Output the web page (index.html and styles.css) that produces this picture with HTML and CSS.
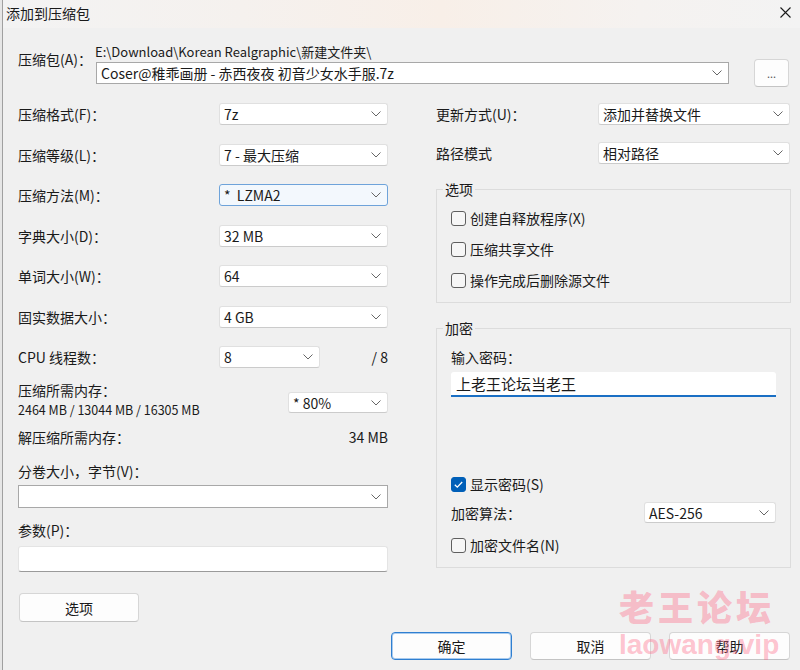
FILE: index.html
```html
<!DOCTYPE html>
<html lang="zh-CN">
<head>
    <meta charset="UTF-8">
    <meta name="viewport" content="width=device-width, initial-scale=1.0">
    <title>添加到压缩包</title>
    <link rel="stylesheet" href="styles.css">
</head>
<body>
    <div class="window">
        <div class="titlebar">
            <span class="title">添加到压缩包</span>
            <svg class="close" width="11" height="11" viewBox="0 0 11 11"><path d="M0.5 0.5 L10.5 10.5 M10.5 0.5 L0.5 10.5" stroke="#1a1a1a" stroke-width="1.1" fill="none"/></svg>
        </div>

        <div class="archive">
            <div class="archive-label">压缩包(A)：</div>
            <div class="archive-fields">
                <div class="archive-path">E:\Download\Korean Realgraphic\新建文件夹\</div>
                <div class="archive-row">
                    <div class="combo edit archive-combo">
                        <span>Coser@稚乖画册 - 赤西夜夜 初音少女水手服.7z</span>
                        <svg class="chev" width="10" height="6" viewBox="0 0 10 6"><polyline points="0.5,0.5 5,5 9.5,0.5" fill="none" stroke="#666" stroke-width="1"/></svg>
                    </div>
                    <button class="btn btn-browse">...</button>
                </div>
            </div>
        </div>

        <div class="columns">
            <!-- 左侧：压缩参数 -->
            <div class="col-left">
                <div class="stack">
                    <div class="field">
                        <span class="field-label">压缩格式(F)：</span>
                        <div class="combo"><span>7z</span><svg class="chev" width="10" height="6" viewBox="0 0 10 6"><polyline points="0.5,0.5 5,5 9.5,0.5" fill="none" stroke="#666" stroke-width="1"/></svg></div>
                    </div>
                    <div class="field">
                        <span class="field-label">压缩等级(L)：</span>
                        <div class="combo"><span>7 - 最大压缩</span><svg class="chev" width="10" height="6" viewBox="0 0 10 6"><polyline points="0.5,0.5 5,5 9.5,0.5" fill="none" stroke="#666" stroke-width="1"/></svg></div>
                    </div>
                    <div class="field">
                        <span class="field-label">压缩方法(M)：</span>
                        <div class="combo focus"><span>*&nbsp; LZMA2</span><svg class="chev" width="10" height="6" viewBox="0 0 10 6"><polyline points="0.5,0.5 5,5 9.5,0.5" fill="none" stroke="#666" stroke-width="1"/></svg></div>
                    </div>
                    <div class="field">
                        <span class="field-label">字典大小(D)：</span>
                        <div class="combo"><span>32 MB</span><svg class="chev" width="10" height="6" viewBox="0 0 10 6"><polyline points="0.5,0.5 5,5 9.5,0.5" fill="none" stroke="#666" stroke-width="1"/></svg></div>
                    </div>
                    <div class="field">
                        <span class="field-label">单词大小(W)：</span>
                        <div class="combo"><span>64</span><svg class="chev" width="10" height="6" viewBox="0 0 10 6"><polyline points="0.5,0.5 5,5 9.5,0.5" fill="none" stroke="#666" stroke-width="1"/></svg></div>
                    </div>
                    <div class="field">
                        <span class="field-label">固实数据大小：</span>
                        <div class="combo"><span>4 GB</span><svg class="chev" width="10" height="6" viewBox="0 0 10 6"><polyline points="0.5,0.5 5,5 9.5,0.5" fill="none" stroke="#666" stroke-width="1"/></svg></div>
                    </div>
                    <div class="field">
                        <span class="field-label">CPU 线程数：</span>
                        <div class="combo combo-threads"><span>8</span><svg class="chev" width="10" height="6" viewBox="0 0 10 6"><polyline points="0.5,0.5 5,5 9.5,0.5" fill="none" stroke="#666" stroke-width="1"/></svg></div>
                        <span class="suffix">/ 8</span>
                    </div>
                </div>

                <div class="memory">
                    <div>
                        <div>压缩所需内存：</div>
                        <div class="memory-values">2464 MB / 13044 MB / 16305 MB</div>
                    </div>
                    <div class="combo combo-memory"><span>* 80%</span><svg class="chev" width="10" height="6" viewBox="0 0 10 6"><polyline points="0.5,0.5 5,5 9.5,0.5" fill="none" stroke="#666" stroke-width="1"/></svg></div>
                </div>

                <div class="unpack">
                    <span>解压缩所需内存：</span>
                    <span>34 MB</span>
                </div>

                <div class="volume-label">分卷大小，字节(V)：</div>
                <div class="combo edit combo-volume"><span></span><svg class="chev" width="10" height="6" viewBox="0 0 10 6"><polyline points="0.5,0.5 5,5 9.5,0.5" fill="none" stroke="#666" stroke-width="1"/></svg></div>

                <div class="param-label">参数(P)：</div>
                <div class="text-input param-input"></div>

                <button class="btn btn-options">选项</button>
            </div>

            <!-- 右侧：更新方式 / 选项 / 加密 -->
            <div class="col-right">
                <div class="stack stack-right">
                    <div class="field">
                        <span class="field-label">更新方式(U)：</span>
                        <div class="combo"><span>添加并替换文件</span><svg class="chev" width="10" height="6" viewBox="0 0 10 6"><polyline points="0.5,0.5 5,5 9.5,0.5" fill="none" stroke="#666" stroke-width="1"/></svg></div>
                    </div>
                    <div class="field">
                        <span class="field-label">路径模式</span>
                        <div class="combo"><span>相对路径</span><svg class="chev" width="10" height="6" viewBox="0 0 10 6"><polyline points="0.5,0.5 5,5 9.5,0.5" fill="none" stroke="#666" stroke-width="1"/></svg></div>
                    </div>
                </div>

                <fieldset class="group">
                    <legend>选项</legend>
                    <div class="group-body options-body">
                        <label class="check"><span class="box"></span>创建自释放程序(X)</label>
                        <label class="check"><span class="box"></span>压缩共享文件</label>
                        <label class="check"><span class="box"></span>操作完成后删除源文件</label>
                    </div>
                </fieldset>

                <fieldset class="group">
                    <legend>加密</legend>
                    <div class="group-body">
                        <div class="pw-label">输入密码：</div>
                        <div class="text-input pw-input">上老王论坛当老王</div>
                        <label class="check show-pw"><span class="box checked"><svg width="15" height="15" viewBox="0 0 15 15"><polyline points="3.8,7.8 6.3,10.2 11.2,5" fill="none" stroke="#fff" stroke-width="1.3"/></svg></span>显示密码(S)</label>
                        <div class="algo">
                            <span>加密算法：</span>
                            <div class="combo combo-algo"><span>AES-256</span><svg class="chev" width="10" height="6" viewBox="0 0 10 6"><polyline points="0.5,0.5 5,5 9.5,0.5" fill="none" stroke="#666" stroke-width="1"/></svg></div>
                        </div>
                        <label class="check enc-names"><span class="box"></span>加密文件名(N)</label>
                    </div>
                </fieldset>
            </div>
        </div>

        <div class="footer">
            <button class="btn btn-default">确定</button>
            <button class="btn">取消</button>
            <button class="btn">帮助</button>
        </div>

        <div class="watermark">
            <div class="wm-cn">老王论坛</div>
            <div class="wm-en">laowang.vip</div>
        </div>
    </div>
</body>
</html>
```

FILE: styles.css
```css
* {
    box-sizing: border-box;
}

body {
    margin: 0;
    background: #e6e6e6;
    font-family: "Noto Sans CJK SC", "Noto Sans", sans-serif;
    font-size: 14px;
    color: #1a1a1a;
}

/* 对话框窗口 */
.window {
    position: relative;
    width: 798px;
    height: 670px;
    margin-left: 2px;
    border-left: 1px solid #a0a0a0;
    background: #f0f0f0;
    overflow: hidden;
}

.titlebar {
    height: 28px;
    display: flex;
    align-items: center;
    justify-content: space-between;
    padding: 0 9px 0 3px;
    background: linear-gradient(90deg, #f3f3f3 0%, #f5f1ee 30%, #f8efe8 55%, #f5f2f0 80%, #f3f3f3 100%);
}

.title {
    font-size: 14px;
    line-height: 16px;
    margin-top: -2px;
}

.close {
    margin-top: -4px;
}

/* 压缩包路径 */
.archive {
    display: flex;
    padding: 16px 0 0 15px;
}

.archive-label {
    width: 77px;
    margin-top: 7px;
    line-height: 16px;
}

.archive-fields {
    flex: 1;
}

.archive-path {
    font-size: 13px;
    line-height: 16px;
}

.archive-row {
    display: flex;
    align-items: center;
    height: 28px;
    margin-top: -1px;
    gap: 25px;
    padding-right: 11px;
}

.archive-combo {
    flex: 1;
    margin-left: 1px;
}

/* 下拉框 */
.combo {
    display: flex;
    align-items: center;
    justify-content: space-between;
    height: 22px;
    padding: 0 6px 0 4px;
    background: #fff;
    border: 1px solid #e0e0e0;
    border-bottom-color: #cbcbcb;
    border-radius: 3px;
    line-height: 16px;
    white-space: nowrap;
}

.combo.edit {
    border: 1px solid #a8a8a8;
    border-radius: 0;
}

.combo.focus {
    border-color: #6ea3da;
    background: #f3f8fd;
}

.chev {
    flex: none;
}

.text-input {
    background: #fff;
    border: 1px solid #e4e4e4;
    border-bottom: 1px solid #9a9a9a;
    border-radius: 3px;
}

/* 按钮 */
.btn {
    width: 121px;
    height: 28px;
    padding: 0;
    background: #fdfdfd;
    border: 1px solid #d6d6d6;
    border-bottom-color: #c4c4c4;
    border-radius: 4px;
    font-family: inherit;
    font-size: 14px;
    color: #1a1a1a;
}

.btn-browse {
    width: 35px;
    font-size: 11px;
    color: #555;
    line-height: 1;
}

.btn-default {
    border: 1px solid #2f7fd1;
    box-shadow: inset 0 0 0 1px #a9cbee;
}

/* 两栏布局 */
.columns {
    display: flex;
    gap: 48px;
    margin-top: 16px;
    padding-left: 15px;
}

.col-left {
    width: 370px;
    display: flex;
    flex-direction: column;
}

.col-right {
    width: 355px;
}

.stack {
    display: flex;
    flex-direction: column;
    gap: 18.5px;
}

.stack-right {
    gap: 17px;
}

.field {
    display: flex;
    align-items: center;
    height: 22px;
}

.field-label {
    width: 201px;
    line-height: 16px;
}

.field .combo {
    width: 169px;
}

.field .combo-threads {
    width: 101px;
}

.suffix {
    margin-left: auto;
}

.col-right .field-label {
    width: 162px;
}

.col-right .field .combo {
    width: 192px;
}

.memory {
    display: flex;
    justify-content: space-between;
    margin-top: 13px;
    line-height: 19px;
}

.memory-values {
    font-size: 12.5px;
}

.memory .combo-memory {
    width: 100px;
    height: 21px;
    margin-top: 11px;
}

.unpack {
    display: flex;
    justify-content: space-between;
    margin-top: 10px;
    line-height: 16px;
}

.volume-label {
    margin-top: 18px;
    line-height: 16px;
}

.combo-volume {
    margin-top: 6px;
    height: 23px;
}

.param-label {
    margin-top: 14px;
    line-height: 16px;
}

.param-input {
    margin-top: 8px;
    height: 26px;
}

.btn-options {
    width: 120px;
    height: 29px;
    margin: 21px 0 0 1px;
}

/* 分组框 */
.group {
    margin: 17px 0 0;
    padding: 0 14px 14px 6px;
    border: 1px solid #dcdcdc;
    min-width: 0;
}

.group legend {
    padding: 0 2px;
    line-height: 16px;
}

.group-body {
    display: flex;
    flex-direction: column;
    padding: 13px 0 0 8px;
}

.options-body {
    gap: 15px;
}

.check {
    display: flex;
    align-items: center;
    gap: 4px;
    line-height: 16px;
}

.box {
    width: 15px;
    height: 15px;
    border: 1px solid #5f5f5f;
    border-radius: 3px;
    background: #f6f6f6;
    flex: none;
}

.box.checked {
    border-color: #005fb8;
    background: #005fb8;
}

.box.checked svg {
    display: block;
    margin: -1px;
}

.pw-label {
    line-height: 16px;
}

.pw-input {
    margin-top: 7px;
    height: 25px;
    padding: 2px 0 0 5px;
    border: none;
    border-bottom: 2px solid #1a6fc4;
    border-radius: 3px 3px 0 0;
    font-size: 15px;
    line-height: 20px;
}

.show-pw {
    margin-top: 79px;
}

.algo {
    display: flex;
    align-items: center;
    justify-content: space-between;
    margin-top: 10px;
    height: 21px;
}

.combo-algo {
    width: 132px;
    height: 21px;
}

.enc-names {
    margin-top: 14px;
}

/* 底部按钮 */
.footer {
    display: flex;
    justify-content: flex-end;
    gap: 18px;
    margin-top: 10px;
    padding-right: 10px;
}

/* 水印（覆盖在按钮上） */
.watermark {
    position: absolute;
    left: 616px;
    top: 588px;
    color: rgba(255, 105, 135, 0.4);
    font-weight: 900;
    pointer-events: none;
}

.wm-cn {
    font-size: 35px;
    line-height: 35px;
    letter-spacing: 4px;
}

.wm-en {
    margin-top: 8px;
    font-family: "Liberation Sans", Arial, sans-serif;
    font-weight: bold;
    font-size: 28px;
    line-height: 28px;
}
```
